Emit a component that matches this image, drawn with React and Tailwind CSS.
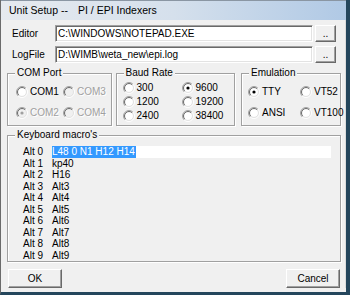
import React from "react";

const F = { fontFamily: '"Liberation Sans", Arial, sans-serif' };

function Radio({ checked, disabled }) {
  const c = 6;
  const arc = (r) => {
    const d = r * 0.7071;
    return {
      tl: `M ${c - d} ${c + d} A ${r} ${r} 0 0 1 ${c + d} ${c - d}`,
      br: `M ${c + d} ${c - d} A ${r} ${r} 0 0 1 ${c - d} ${c + d}`,
    };
  };
  const o = arc(5.5);
  const i = arc(4.5);
  return (
    <svg width="12" height="12" viewBox="0 0 12 12" className="shrink-0">
      <circle cx="6" cy="6" r="4" fill={disabled ? "#f0f0f0" : "#ffffff"} />
      <path d={o.tl} stroke="#a0a0a0" strokeWidth="1" fill="none" />
      <path d={o.br} stroke="#ffffff" strokeWidth="1" fill="none" />
      <path d={i.tl} stroke="#696969" strokeWidth="1" fill="none" />
      <path d={i.br} stroke="#e3e3e3" strokeWidth="1" fill="none" />
      {checked && <circle cx="6" cy="6" r="1.6" fill={disabled ? "#a0a0a0" : "#000"} />}
    </svg>
  );
}

function RadioItem({ label, checked, disabled, gap = "gap-[2px]" }) {
  return (
    <div className={`flex items-center ${gap}`}>
      <Radio checked={checked} disabled={disabled} />
      <span
        className={`text-[10px] leading-[12px] ${disabled ? "text-[#a0a0a0] [text-shadow:1px_1px_0_#fff]" : "text-black"}`}
      >
        {label}
      </span>
    </div>
  );
}

function Group({ title, className, children }) {
  return (
    <div
      className={`relative border border-[#a0a0a0] shadow-[inset_1px_1px_0_#fff,1px_1px_0_#fff] ${className}`}
    >
      <span className="absolute left-[7px] top-[-7px] bg-[#f0f0f0] px-[2px] text-[10px] leading-[12px] text-black">
        {title}
      </span>
      {children}
    </div>
  );
}

function Button({ children, className }) {
  return (
    <div
      className={`flex items-center justify-center border border-t-white border-l-white border-r-[#696969] border-b-[#696969] shadow-[inset_-1px_-1px_0_#a0a0a0] bg-[#f0f0f0] text-[10px] text-black ${className}`}
    >
      {children}
    </div>
  );
}

function Input({ value, className }) {
  return (
    <div
      className={`flex items-center border border-t-[#a0a0a0] border-l-[#a0a0a0] border-r-white border-b-white shadow-[inset_1px_1px_0_#696969,inset_-1px_-1px_0_#e3e3e3] bg-white pl-[2px] text-[10px] text-black ${className}`}
    >
      {value}
    </div>
  );
}

export default function App() {
  const macros = [
    ["Alt 0", "L48 0 N1 H12 H14"],
    ["Alt 1", "kp40"],
    ["Alt 2", "H16"],
    ["Alt 3", "Alt3"],
    ["Alt 4", "Alt4"],
    ["Alt 5", "Alt5"],
    ["Alt 6", "Alt6"],
    ["Alt 7", "Alt7"],
    ["Alt 8", "Alt8"],
    ["Alt 9", "Alt9"],
  ];
  return (
    <div
      style={F}
      className="w-[350px] h-[295px] overflow-hidden flex flex-col bg-[#f0f0f0] border-l border-l-[#6b6b6b] border-r-[4px] border-r-[#24465c] border-b-[3px] border-b-[#24465c]"
    >
      {/* title bar */}
      <div className="h-[20px] shrink-0 flex items-center border-t border-t-[#8a96a3] bg-gradient-to-r from-[#e6eaef] via-[#d5e0ec] to-[#b0c9e5] pl-[8px] text-[10.5px] text-black">
        <span>Unit Setup --</span>
        <span className="ml-[10px]">PI / EPI Indexers</span>
      </div>

      {/* body */}
      <div className="flex flex-col pl-[6px] pr-[4px] border-r border-r-[#dcdcdc]">
        <div className="mt-[5px] flex items-center h-[17px]">
          <span className="w-[48px] pl-[5px] text-[10px] text-black">Editor</span>
          <Input value="C:\WINDOWS\NOTEPAD.EXE" className="w-[258px] h-[17px]" />
          <Button className="ml-[2px] w-[21px] h-[17px] leading-[8px]">..</Button>
        </div>
        <div className="mt-[4px] flex items-center h-[17px]">
          <span className="w-[48px] pl-[5px] text-[10px] text-black">LogFile</span>
          <Input value="D:\WIMB\weta_new\epi.log" className="w-[258px] h-[17px]" />
          <Button className="ml-[2px] w-[21px] h-[17px] leading-[8px]">..</Button>
        </div>

        <div className="mt-[10px] flex h-[53px]">
          <Group title="COM Port" className="w-[105px]">
            <div className="grid grid-cols-[47px_40px] gap-y-[9px] pl-[8px] pt-[12px]">
              <RadioItem label="COM1" gap="gap-[2px]" />
              <RadioItem label="COM3" disabled gap="gap-[2px]" />
              <RadioItem label="COM2" checked disabled gap="gap-[2px]" />
              <RadioItem label="COM4" disabled gap="gap-[2px]" />
            </div>
          </Group>
          <Group title="Baud Rate" className="ml-[4px] w-[120px]">
            <div className="grid grid-cols-[59px_50px] gap-y-[2px] pl-[6px] pt-[8px]">
              <RadioItem label="300" />
              <RadioItem label="9600" checked />
              <RadioItem label="1200" />
              <RadioItem label="19200" />
              <RadioItem label="2400" />
              <RadioItem label="38400" />
            </div>
          </Group>
          <Group title="Emulation" className="ml-[6px] w-[100px]">
            <div className="grid grid-cols-[52px_44px] gap-y-[9px] pl-[6px] pt-[12px]">
              <RadioItem label="TTY" checked />
              <RadioItem label="VT52" />
              <RadioItem label="ANSI" />
              <RadioItem label="VT100" />
            </div>
          </Group>
        </div>

        <Group title="Keyboard macro's" className="mt-[9px] h-[127px]">
          <div className="flex flex-col pt-[10px] pl-[15px] pr-[9px]">
            {macros.map(([k, v], idx) => (
              <div key={k} className="flex items-center h-[11.5px] text-[10px] text-black">
                <span className="w-[29px]">{k}</span>
                {idx === 0 ? (
                  <div className="flex-1 h-[12px] bg-white flex items-center">
                    <span className="bg-[#3399ff] text-white leading-[12px] pr-[1px]">{v}</span>
                  </div>
                ) : (
                  <span>{v}</span>
                )}
              </div>
            ))}
          </div>
        </Group>

        <div className="mt-[7px] flex justify-between pl-[1px] pr-[1px]">
          <Button className="w-[54px] h-[19px]">OK</Button>
          <Button className="w-[54px] h-[19px]">Cancel</Button>
        </div>
      </div>
    </div>
  );
}
